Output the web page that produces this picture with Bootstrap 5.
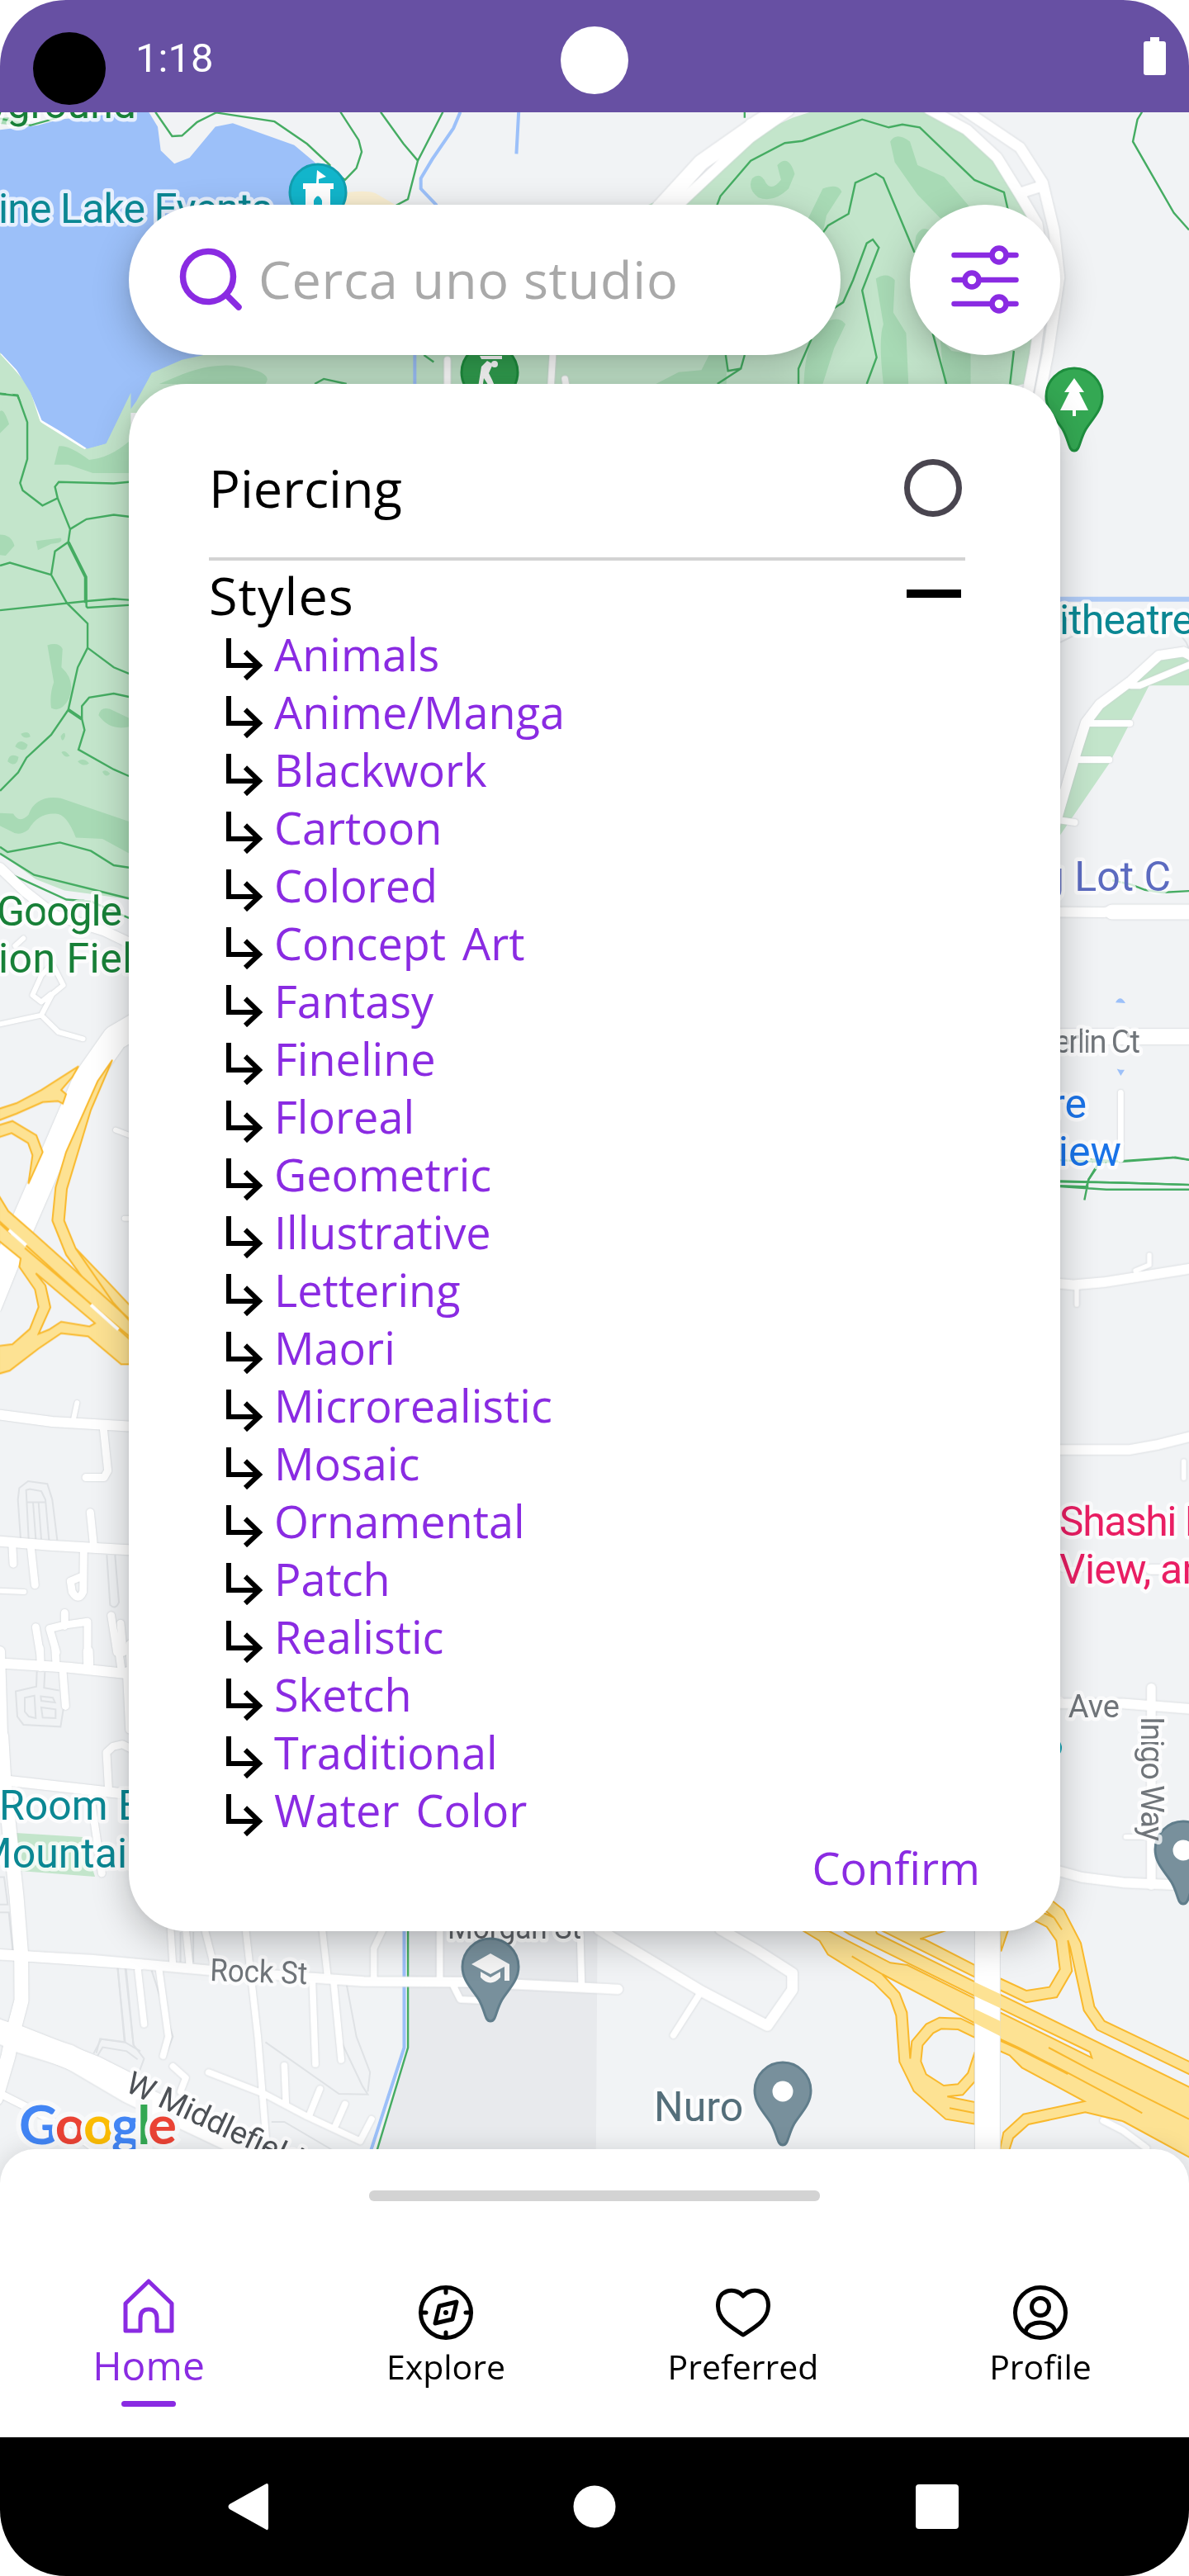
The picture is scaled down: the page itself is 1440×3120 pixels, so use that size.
<!DOCTYPE html>
<html lang="it">
<head>
<meta charset="utf-8">
<meta name="viewport" content="width=device-width, initial-scale=1">
<title>Cerca uno studio</title>
<link href="https://cdn.jsdelivr.net/npm/bootstrap@5.3.0/dist/css/bootstrap.min.css" rel="stylesheet">
<style>
:root{--violet:#8a2be2}
body{background:#fff;font-family:"Open Sans",sans-serif;color:#000}
.phone{width:1440px;height:3120px;border-radius:80px;background:#fff}
.statusbar{height:136px;background:#6750a3;padding:0 28px 0 40px}
.cam{width:88px;height:88px;background:#000;margin-top:30px}
.clock{font:400 49px/1 Roboto,sans-serif;margin:4px 0 0 36px}
.lens{width:82px;height:82px;top:32px;left:679px}
.mapview{height:2467px;padding:112px 156px 0}
.mapart{top:0;left:0;width:1440px;height:2524px;background:#f1f3f5}
.float{box-shadow:0 14px 46px rgba(0,0,0,.24),0 0 14px rgba(0,0,0,.06);background:#fff}
.searchbox{width:862px;height:182px;border-radius:91px;padding-left:61px}
.searchbox span{font-size:63px;color:#a9a9a9;letter-spacing:.7px;margin-left:18px;padding-bottom:2px}
.filterbtn{width:182px;height:182px}
.panel{height:1874px;margin-top:35px;border-radius:70px;padding:0 115px 0 97px}
.opt{font-size:63px;line-height:84px}
.opt-styles{height:84px;line-height:78px;letter-spacing:1px}
.first-opt{height:210px;padding-top:43px}
.first-opt>span:first-child{margin-top:41px}
.radio{width:70px;height:70px;border:7px solid #49454f;margin-right:4px}
.rule{height:4px;background:#d3d3d3}
.minus{width:66px;height:10px;background:#000;margin:0 5px 4px 0}
.styles{font-size:54px;line-height:58px;color:var(--violet);word-spacing:6px}
.styles li{height:70px;padding-left:20px}
.styles li span{height:70px}
.styles svg{margin-right:13px}
.confirm{font-size:54px;line-height:58px;color:var(--violet);margin-right:-18px}
.sheet{height:349px;border-radius:42px 42px 0 0;background:#fff;padding-top:50px;box-shadow:0 0 30px rgba(0,0,0,.13)}
.grip{width:546px;height:13px;border-radius:6px;background:#d3d3d3}
.tabs{height:190px;margin-top:94px}
.tabs .tab{width:25%;font-size:41px;line-height:58px}
.tab .glyph{height:72px;margin-bottom:5px;padding-top:10px}
.tabs .tab.on{font-size:48px;line-height:56px;color:var(--violet)}
.tab.on .glyph{padding:0 0 7px}
.dash{width:66px;height:7px;border-radius:4px;background:var(--violet);margin-top:15px}
.sysnav{height:168px;background:#000}
/* map */
.z path,.z use{vector-effect:non-scaling-stroke}
.park{fill:#c3e5cb}.deep{fill:#a8dab5}.water{fill:#9cc0f9}.trail{fill:none;stroke:#45ac62;stroke-width:2.4}
.roads{fill:none;stroke:#fff;stroke-linecap:round;stroke-linejoin:round;filter:drop-shadow(0 0 1.2px #c4c8cc)}
.faint{fill:none;stroke:#dfe2e5;stroke-width:2}
.hw{fill:#fde293;stroke:#f9b92d;stroke-width:2}
.hwline{fill:none;stroke:#f9b92d;stroke-width:2}
.lbl{font-family:Roboto,sans-serif;font-size:50px;paint-order:stroke;stroke:#fff;stroke-opacity:.75;stroke-width:9px;stroke-linejoin:round}
.st{font-size:38px;fill:#70757a}
</style>
</head>
<body>
<div class="phone overflow-hidden d-flex flex-column position-relative mx-auto">
<header class="statusbar d-flex align-items-center text-white position-relative">
  <div class="cam rounded-circle"></div><div class="clock">1:18</div>
  <div class="lens rounded-circle bg-white position-absolute"></div>
  <svg class="ms-auto" width="27" height="46" viewBox="0 0 27 46"><path fill="#fff" d="M8 0h11v5h5q3 0 3 3v35q0 3-3 3H3q-3 0-3-3V8q0-3 3-3h5z"/></svg>
</header>

<main class="mapview position-relative">
<svg class="mapart position-absolute" viewBox="0 136 1440 2524">
  <defs>
    <path id="pin" d="M0 101C-7 101-6 89-14 75C-22 62-34 52-34 35A34 34 0 0 1 34 35C34 52 22 62 14 75C6 89 7 101 0 101z"/>
  </defs>
  <!-- lake, parks and golf course -->
  <g class="z" transform="scale(.91837 .35714)">
    <path class="park" d="M0 1180L170 1190L300 1100H1000L850 700L930 610L985 470L1045 400L1080 370H1215L1260 430L1310 540L1340 650L1360 760L1370 950L1365 1140L1350 1302L1200 1400H170L170 2000L0 2000z"/>
    <path fill="#fbf0d3" d="M440 660Q480 640 495 655L525 700L440 720z"/>
    <path fill="#fff" d="M0 1200L18 1250L38 1310L53 1430L75 1478L112 1524L120 1500L40 1300L20 1200z"/>
    <path class="water" d="M0 440L50 425L78 405L195 375L208 430L212 510L230 555L250 535L284 430L307 418L388 492L415 550L440 640L450 730L440 1100L265 1206L240 1220L200 1265L180 1360L155 1450L140 1505L115 1522L78 1460L55 1425L40 1330L22 1255L0 1195z"/>
    <path class="deep" d="M0 400L40 395L20 425L0 420zM1174 480Q1182 445 1200 480L1210 560L1245 600L1275 690L1290 740L1240 740L1210 660L1180 550zM1025 560Q1040 520 1048 590L1040 640Q1020 690 1000 670Q985 640 992 605Q1003 580 1010 620Q1018 650 1030 610zM1065 745L1085 640Q1105 620 1110 650L1090 730L1085 790zM210 1302L240 1270Q290 1220 330 1250Q360 1270 350 1302zM865 1302L895 1262L925 1255L935 1204H958V1302zM1060 1302Q1062 1150 1085 1100Q1105 1065 1115 1100L1100 1180L1085 1302zM1155 945Q1170 920 1180 950L1178 1060L1195 1130L1198 1302H1165Q1158 1150 1165 1100zM1208 800Q1215 765 1225 780V850H1205zM1240 1150L1255 1190L1280 1200V1302H1245z"/>
    <path fill="none" stroke="#9cc0f9" stroke-width="4" d="M607 380L598 435L570 540L555 605V640L575 694L547 1204V1302M684 380L681 522"/>
    <path class="trail" d="M205 380L227 462L240 460L260 414L285 382L362 412L405 488L435 560L430 650M430 560L455 610L470 570L477 515L473 475L449 380M502 380L532 487L551 545L538 675L520 700M551 545L584 380M982 380V400M945 700L950 665L990 545L1035 485L1058 478L1137 405L1172 432L1190 422L1213 432L1285 610L1324 652L1330 720M1085 790L1092 765L1119 725L1128 620L1155 588L1165 604L1206 856M1100 1045L1112 1025L1125 950L1143 825L1151 812L1159 840L1137 985L1156 1212L1143 1302M1070 1150L1053 1250V1302M1230 1130L1248 1302M1337 1190L1332 1302M982 1204L977 1250L960 1258L957 1204M977 1250L946 1302M415 1302L427 1285L457 1302M559 1204L572 1228M1506 380L1500 405L1494 480L1548 722L1568 780M0 1335L23 1340L36 1430V1568M0 402L40 425L75 400"/>
  </g>
  <g class="z" transform="matrix(.4592 0 0 .44643 0 440)">
    <path class="park" d="M0 130L20 70L108 160L225 235L280 218L345 80V1455L240 1440L170 1430L95 1400L0 1330z"/>
    <path class="deep" d="M0 130Q10 120 24 165L0 190zM155 225Q180 220 235 262Q290 258 345 208V298H245L180 275L143 275zM0 465Q30 465 38 495L15 522L0 520zM95 482L160 474Q170 488 135 490L100 507zM125 765Q155 755 165 775L162 825Q200 860 182 910Q160 950 135 935Q130 900 142 865zM260 955Q265 930 290 938L345 965V985Q290 1000 260 955zM55 1005q22-10 25 8q-18 8-25-8zM40 1040q10-25 33-5q-5 25-33 5zM20 1080q5-25 29-12q-5 32-29 12zM160 1012q12-18 12 0q-8 22-12 0zM162 1055q10-8 22 10q-12 8-22-10zM205 1080q15-12 30 5q-15 12-30-5zM270 1108q10-8 20 5q-10 14-20-5zM0 1220L35 1222Q50 1250 75 1225Q95 1170 160 1180L345 1245V1332L270 1290L200 1287Q175 1220 145 1222Q100 1220 75 1265Q50 1285 30 1270L0 1255z"/>
    <path class="trail" d="M0 83L47 88L72 160V260L53 325L60 345L112 386L152 366L145 335L155 322L300 326L340 322M152 366L185 450L228 423L300 411L340 416M185 450L180 485L145 510L135 574L26 541L0 549M180 485L226 580L228 660L231 663L340 656M0 670L230 645L300 639L340 642M135 574L176 650L231 706V772L205 825L180 940L135 1008L70 1070L48 1110L0 1160M231 772L300 825L340 842M180 940L216 965V930L235 907L300 896L340 905M216 965L223 995L207 1048L300 1102L340 1120M0 1312L20 1326L158 1300L240 1323L300 1362L340 1368M0 1330L90 1388L340 1452M0 1373L175 1455L240 1460L340 1505"/>
    <path stroke="#45ac62" stroke-width="4" fill="none" d="M180 485L226 580V650M180 940L216 965"/>
  </g>
  <g class="z" transform="matrix(.33333 0 0 .63776 1260 440)">
    <path class="park" d="M60 905L130 760L165 690L215 650L330 603L430 560L520 552L545 570V612H395L250 760z"/>
    <path fill="none" stroke="#b0cbf6" stroke-width="6" d="M60 448H545"/>
    <path fill="#dcebdd" d="M60 460H150L60 490z"/>
    <path class="water" d="M273 1214Q290 1198 309 1215zM278 1340L290 1342L306 1342L292 1353z"/>
    <path class="trail" d="M262 982L330 990L380 1000L440 1005L545 1002M180 1512L300 1516L430 1511L490 1508L545 1513M72 1553L545 1560M72 1562L175 1564M210 1520L175 1550L165 1568"/>
    <path class="faint" d="M72 530L150 510M72 490L290 470M500 510L530 530L545 548"/>
  </g>
  <g class="z" transform="matrix(.33333 0 0 .63776 1260 1400)">
    <path class="trail" d="M72 8L230 12L480 3L545 8M72 49L300 51L540 55M72 58L240 64H545M205 22L175 45L160 84M295 0V12"/>
  </g>
  <path class="park" d="M19 2220L100 2225L115 2273L24 2266z"/>
  <g class="z" transform="matrix(.91837 0 0 .33333 0 2300)">
    <path fill="#e8eaed" d="M537 60H788L786 915H495L537 540z"/>
    <path fill="none" stroke="#9cc0f9" stroke-width="4" d="M533 100V540L489 915"/>
    <path class="trail" d="M538 100V540L497 915"/>
  </g>
  <!-- minor street outlines -->
  <g class="z">
    <path class="faint" transform="matrix(.33333 0 0 .63776 0 1000)" d="M75 1355L65 1280L70 1258L102 1245L172 1250L190 1280L208 1357M104 1355L95 1262L108 1260L150 1264L165 1280L178 1357M130 1355L120 1285M150 1355L140 1285M95 1285H165M388 1385L400 1480Q420 1490 432 1475L418 1385"/>
    <path class="faint" transform="matrix(.33333 0 0 .39541 0 2000)" d="M134 62L132 108L57 123L63 200L85 225L220 231L230 178M163 64L160 112L215 120M90 142L125 136L130 205L105 200L90 185zM148 138L192 142L200 157L150 152zM150 172L202 178V205L155 203zM428 970L452 1195M458 972L485 1207M340 1232L368 1188L455 1198L510 1225M355 1238L373 1213L460 1225L500 1250M0 692H15L28 776H0M0 800H32L46 915"/>
    <path class="faint" transform="matrix(.91837 0 0 .33333 0 2300)" d="M155 250L165 520L132 508L127 560M165 250L176 530L190 580L182 640M200 260L228 500L218 570M440 280L447 500L478 680L485 710L447 708L350 520M455 280L470 500L488 630L485 700M255 120V230M238 120V230M358 810H375L440 915"/>
  </g>
  <!-- streets -->
  <g class="roads">
    <g class="z" transform="scale(.91837 .35714)">
      <path stroke-width="19" d="M868 710L925 550L1000 415L1030 370"/><path stroke-width="13" d="M888 710L950 560L990 465L1040 375"/>
      <path stroke-width="13" d="M1225 370L1275 440L1315 535L1345 660L1368 760L1378 950L1365 1200L1352 1380M990 420L985 470M1345 655L1375 630"/>
      <path stroke-width="13" d="M1270 370L1345 500L1375 620L1390 780L1397 940L1382 1200L1368 1380"/>
      <path stroke-width="8" d="M590 1220V1330M729 1204L726 1330M745 1285L748 1330"/>
    </g>
    <g class="z" transform="matrix(.33333 0 0 .63776 1260 440)">
      <path stroke-width="12" d="M40 900L130 740L165 682L215 648L330 603L430 555L520 548L560 558"/>
      <path stroke-width="8" d="M330 612H360L545 572M165 684H325M130 753H250M75 868L125 872"/>
      <path stroke-width="12" d="M60 1042L230 1043L260 1040"/><path stroke-width="18" d="M260 1042H560"/><path stroke-width="19" d="M60 1279H560"/><path stroke-width="7" d="M292 1385V1512"/>
    </g>
    <g class="z" transform="matrix(.33333 0 0 .63776 1260 1400)">
      <path stroke-width="12" d="M60 242L120 245L230 240L545 214M60 558H325L430 548L545 533M60 1040H300L545 1050M60 1357L150 1370L300 1380L560 1386M400 785H545"/>
      <path stroke-width="11" d="M403 1010V1385"/><path stroke-width="6" d="M132 250V282M345 218L396 207V188M521 580V612M310 1293H380M80 785H150"/>
    </g>
    <g class="z" transform="matrix(.33333 0 0 .63776 0 1000)">
      <path stroke-width="12" d="M0 80L90 125L200 170L380 200L480 225M0 1119L190 1132L480 1141M0 1359L180 1367L480 1376"/>
      <path stroke-width="6" d="M0 377L150 360L190 320L230 303L190 262L150 285L118 322L150 335L185 320M150 360L212 392L302 405M55 228L85 214M280 1096L268 1125M420 578L480 590M452 746H480M0 1453L88 1455"/>
      <path stroke-width="9" d="M375 1140L392 1225L378 1238H312M328 1304L340 1365M45 1370L48 1402M112 1370L127 1442M304 1375L302 1455Q285 1475 262 1455L256 1435L300 1425M130 1522L145 1570M404 1500L425 1570M438 1515L448 1570M235 1495V1520M180 1525L235 1518L318 1512V1570M180 1525L205 1570"/>
      <path stroke-width="30" stroke-linecap="butt" d="M-40 913L47 800L197 620L310 483L418 403L500 378"/>
    </g>
    <g class="z" transform="matrix(.33333 0 0 .39541 0 2000)">
      <path stroke-width="12" d="M-10 36L250 50L480 70L475 -20M0 0L14 395L490 440M0 928L510 960M320 0L322 50"/>
      <path stroke-width="17" d="M5 260L15 400L60 750L77 930L78 1070L50 1160L30 1240L-15 1370"/>
      <path stroke-width="9" d="M145 -10L148 50M200 -10L205 50M228 60L238 168M430 -10L440 50M460 60L470 240M395 430L387 310L410 292L445 285L480 300M330 450L370 680M0 1355L130 1410L290 1490L370 1540"/>
      <path stroke-width="28" d="M-20 1160L60 1180L210 1230L345 1275L520 1350"/>
    </g>
    <g class="z" transform="matrix(.91837 0 0 .33333 0 2300)">
      <path stroke-width="12" d="M0 203L120 220L280 260L480 300L620 302L815 328M20 0L30 200L28 350L15 480"/>
      <path stroke-width="8" d="M225 110L228 240M245 110L250 240M270 110L282 240M324 110L340 500L352 910M425 110L432 280M505 110L493 180V290M580 110V290M765 110L767 310M182 260L190 455M210 260L222 500L215 570M412 300L416 600M440 300L450 585M597 310L607 365L630 368M228 608L245 650L238 700M275 630L350 710L405 790L475 880L490 800M375 605L377 740M422 690L408 785M455 745L443 820M925 335L888 495M1455 805L1480 840L1512 905"/>
      <path stroke-width="13" d="M790 110L810 145L925 335L1012 460L1045 330V270L1000 190L950 110"/>
      <path stroke-width="28" d="M-10 470L30 520L90 570L170 700L330 910L345 960"/>
    </g>
  </g>
  <!-- highways -->
  <g class="z" transform="matrix(.33333 0 0 .63776 0 1000)">
    <path class="hw" d="M-5 538L60 527L150 502L285 457L262 478L222 502L240 510L228 528L210 523L155 525L60 547L-5 560z"/>
    <path class="hw" d="M-5 569L45 561L132 588L155 620L103 680L118 626L102 603L42 584L-5 592z"/>
    <path class="hw" d="M408 445L330 540L243 690L233 750L275 803L380 860L475 913V960L350 895L240 815L190 750L202 687L240 620L355 485z"/>
    <path class="hw" d="M-5 702L30 732L120 773L470 937V1023H440L320 970L222 964L140 993L35 1035L-5 1041V988L45 985L108 956L140 914L127 881L70 838L75 822L-5 788z"/>
    <path fill="#f1f3f5" stroke="#f9b92d" stroke-width="2" d="M130 850L165 873L183 915L140 965L178 957L222 942L325 951L345 945z"/>
    <path class="hwline" d="M-5 750L90 795L470 975M90 802L470 970M275 803L410 905L470 940M0 756L40 775"/>
    <path fill="none" stroke="#fff" stroke-width="4" d="M32 768L95 797M330 910L430 957"/>
  </g>
  <g class="z" transform="matrix(.33333 0 0 .33333 960 2300)">
    <path class="hw" d="M35 114L98 152L128 202L295 305L355 365L376 424L388 592L440 698L556 800L662 818V738L562 718L618 712L662 663V556L637 632L600 673L549 678L485 637L466 590L472 532L511 487L540 472L601 474L662 504V459L610 434L533 431L485 455L433 517L427 580L415 412L388 342L325 273L662 451V362L417 240L355 232L133 117z"/>
    <path class="hw" d="M183 114L205 128L662 353V301L306 125L300 110zM318 112L662 284V240L480 147L463 145L565 112z"/>
    <path class="hw" d="M752 288L849 333L933 320L971 255L958 151L923 101L870 74L910 50L950 68L915 40L935 0L985 40L1047 160L1096 390L1133 444L1450 595V641L1106 475L1058 405L1008 175L1000 150L1015 262L960 357L848 376L752 330zM752 110H784L757 190z"/>
    <path class="hw" d="M752 346L1460 693V949L1205 810L1195 806L1063 775L857 819L801 869L786 915H752L766 848L838 782L1060 735L833 613L788 568L752 552V411L1087 577L1080 556L752 397z"/>
    <path class="hwline" d="M215 208L325 273M752 508L820 540L1000 632L1180 728L1270 778M752 514L820 545L1000 636M930 540L1080 620L1440 800M570 760L662 778M950 68L978 112"/>
    <path fill="#fff" stroke="#dcdfe2" stroke-width="1" d="M661 100H754V930H661z"/>
    <path fill="#fde293" d="M659 301L755 346V397L659 352zM659 398L755 444V499L659 450z"/>
  </g>
  <!-- labels -->
  <g class="lbl">
    <g fill="#188038"><text x="165" y="143" text-anchor="end">yground</text><text x="-4" y="1121" textLength="152">Google</text><text x="-2" y="1178" textLength="191">ion Field</text></g>
    <g fill="#0b8793"><text x="-2" y="270" textLength="332">ine Lake Events</text><text x="1283" y="768" textLength="163">itheatre</text><text x="-1" y="2204">Room B</text><text x="-29" y="2262">Mountain</text></g>
    <text x="1418" y="1079" text-anchor="end" fill="#5c6bc0">ng Lot C</text>
    <g fill="#1a73e8"><text x="1316" y="1354" text-anchor="end">re</text><text x="1358" y="1412" text-anchor="end">View</text></g>
    <g fill="#e91e63"><text x="1283" y="1860" textLength="265">Shashi Hotel</text><text x="1283" y="1918" textLength="176">View, an</text></g>
    <text x="792" y="2569" fill="#546e7a">Nuro</text>
    <g class="st"><text x="1381" y="1275" text-anchor="end" textLength="136">Merlin Ct</text><text x="1356" y="2080" text-anchor="end">r Ave</text><text transform="translate(254 2399) rotate(2)" textLength="118" lengthAdjust="spacingAndGlyphs">Rock St</text><text x="542" y="2348" textLength="162" lengthAdjust="spacingAndGlyphs" fill="#5f6368">Morgan St</text></g>
    <text class="st" style="fill:#4d5156" transform="translate(150 2532) rotate(25)" textLength="285" lengthAdjust="spacingAndGlyphs">W Middlefield Rd</text>
  </g>
  <!-- pins -->
  <g stroke-width="3">
    <use href="#pin" x="385" y="198" fill="#12b5cb" stroke="#129eaf"/><path fill="#fff" d="M384 206L395 214L386 217V222H404V229H400V252H390V243Q385 232 380 243V252H370V229H367V222H383z"/>
    <use href="#pin" x="593" y="416" fill="#319f4f" stroke="#1e8e3e"/><path fill="#fff" d="M581 431H608V435H583zM590 437L597 441L592 452L596 460L601 472H595L586 458L584 471L579 469L583 444z"/><circle cx="599" cy="441" r="4" fill="#fff"/>
    <use href="#pin" x="1301" y="445" fill="#34a853" stroke="#1e8e3e"/><path fill="#fff" d="M1301 458L1313 475H1307L1318 497H1303V504H1299V497H1284L1295 475H1289z"/>
    <g fill="#78909c" stroke="#607d8b"><use href="#pin" x="594" y="2347"/><use href="#pin" x="948" y="2497"/><use href="#pin" x="1433" y="2205"/></g>
    <circle cx="948" cy="2533" r="12.500" fill="#fff"/><circle cx="1433" cy="2241" r="12.500" fill="#fff"/>
    <path fill="#f5f5f5" d="M571 2379L594 2366L617 2379V2399H611V2382L594 2391zM582 2388L594 2395L606 2388V2395Q594 2408 582 2395z"/>
    <circle cx="1274" cy="2117" r="12" fill="#12a5b5"/>
  </g>
  <g class="lbl"><text class="st" transform="translate(1382 2079) rotate(90)" textLength="151">Inigo Way</text></g>
  <text x="23" y="2597" textLength="191" style="font:700 65px Lato,sans-serif;paint-order:stroke;stroke:#f8f9fa;stroke-width:12px"><tspan fill="#4285f4">G</tspan><tspan fill="#ea4335">o</tspan><tspan fill="#fbbc04">o</tspan><tspan fill="#4285f4">g</tspan><tspan fill="#34a853">l</tspan><tspan fill="#ea4335">e</tspan></text>
</svg>

<div class="d-flex justify-content-between position-relative">
  <div class="searchbox float d-flex align-items-center">
    <svg width="78" height="78" viewBox="0 0 78 78" fill="none" stroke="#8a2be2" stroke-width="7.500" stroke-linecap="round"><circle cx="35" cy="35" r="30.500"/><path d="M57 57L72 72"/></svg>
    <span>Cerca uno studio</span>
  </div>
  <div class="filterbtn float rounded-circle d-flex align-items-center justify-content-center">
    <svg width="82" height="84" viewBox="0 0 82 84" fill="#fff" stroke="#8a2be2" stroke-width="6.500" stroke-linecap="round"><path d="M3.500 12H78.500M3.500 42H78.500M3.500 71H78.500"/><circle cx="58" cy="12" r="8.500"/><circle cx="25" cy="42" r="8.500"/><circle cx="58" cy="71" r="8.500"/></svg>
  </div>
</div>

<section class="panel float position-relative">
  <div class="opt first-opt d-flex justify-content-between"><span>Piercing</span><span class="radio rounded-circle mt-5"></span></div>
  <div class="rule"></div>
  <div class="opt opt-styles d-flex justify-content-between align-items-center"><span>Styles</span><span class="minus"></span></div>
  <ul class="styles list-unstyled mb-0" id="styles"></ul>
  <div class="confirm text-end">Confirm</div>
</section>
</main>

<footer class="sheet position-relative">
  <div class="grip mx-auto"></div>
  <nav class="tabs d-flex text-center">
    <div class="tab on d-flex flex-column align-items-center"><div class="glyph d-flex align-items-center"><svg width="62" height="66" viewBox="0 0 62 66" fill="none" stroke="#8a2be2" stroke-width="5" stroke-linejoin="round"><path d="M31 3L59 30V63H41V48Q41 37 31 37Q21 37 21 48V63H3V30z"/></svg></div><span>Home</span><i class="dash"></i></div>
    <div class="tab d-flex flex-column align-items-center"><div class="glyph d-flex align-items-center"><svg width="66" height="66" viewBox="0 0 66 66" fill="none" stroke="#000" stroke-width="5" stroke-linejoin="round" stroke-linecap="round"><circle cx="33" cy="33" r="30.500"/><path d="M33 3V9M33 57V63M3 33H9M57 33H63M25 25L46 20L41 41L20 46z"/><circle cx="33" cy="33" r="3" fill="#000" stroke="none"/></svg></div><span>Explore</span></div>
    <div class="tab d-flex flex-column align-items-center"><div class="glyph d-flex align-items-center"><svg width="66" height="60" viewBox="0 0 66 60" fill="none" stroke="#000" stroke-width="5" stroke-linejoin="round"><path d="M33 10C23-2 2 2 2.500 22C3 40 20 48 33 57C46 48 63 40 63.500 22C64 2 43-2 33 10z"/></svg></div><span>Preferred</span></div>
    <div class="tab d-flex flex-column align-items-center"><div class="glyph d-flex align-items-center"><svg width="66" height="66" viewBox="0 0 66 66" fill="none" stroke="#000" stroke-width="5"><circle cx="33" cy="33" r="30.500"/><circle cx="33" cy="26" r="10.500"/><path d="M15 57C16 41 50 41 51 57"/></svg></div><span>Profile</span></div>
  </nav>
</footer>
<div class="sysnav position-relative d-flex justify-content-center align-items-center">
  <svg width="1440" height="168" viewBox="0 0 1440 168" fill="#fff"><path d="M321 57Q325 54 325 59V109Q325 114 321 111L278 87Q275 84 278 81z"/><circle cx="720" cy="84" r="25.500"/><rect x="1109" y="57" width="52" height="54" rx="4"/></svg>
</div>
</div>
<script>
const names=['Animals','Anime/Manga','Blackwork','Cartoon','Colored','Concept Art','Fantasy','Fineline','Floreal','Geometric','Illustrative','Lettering','Maori','Microrealistic','Mosaic','Ornamental','Patch','Realistic','Sketch','Traditional','Water Color'];
document.getElementById('styles').innerHTML=names.map(n=>`<li class="d-flex align-items-center"><svg width="46" height="52" viewBox="0 0 46 52" fill="none" stroke="#000" stroke-width="6"><path d="M4 1V34H41M24 17.500L41 34L24 50"/></svg><span>${n}</span></li>`).join('');
</script>
<script src="https://cdn.jsdelivr.net/npm/bootstrap@5.3.0/dist/js/bootstrap.bundle.min.js"></script>
</body>
</html>
